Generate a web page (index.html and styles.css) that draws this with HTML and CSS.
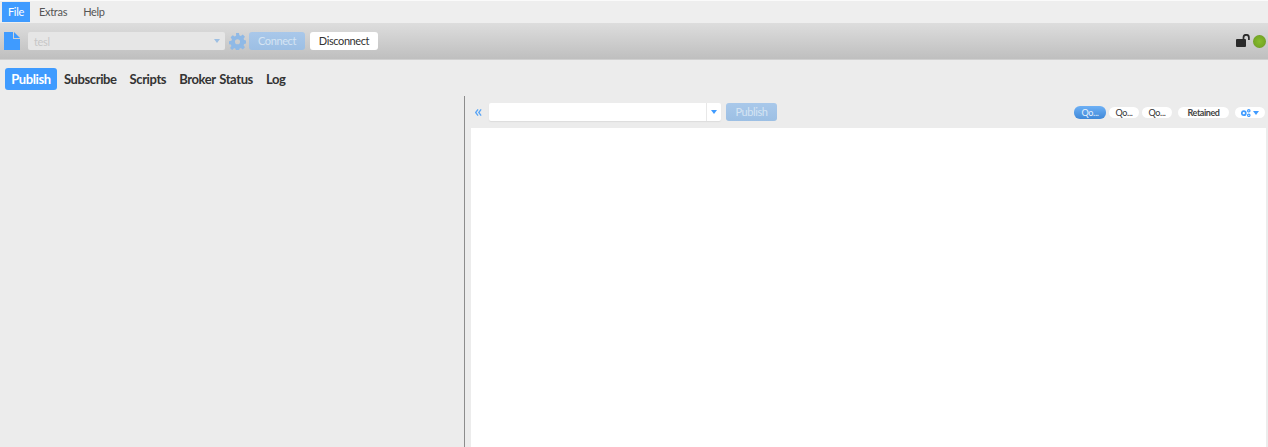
FILE: index.html
```html
<!DOCTYPE html>
<html lang="en">
<head>
<meta charset="utf-8">
<title>MQTT client</title>
<link rel="stylesheet" href="styles.css">
</head>
<body>
<nav class="menubar">
  <span class="menu active">File</span>
  <span class="menu">Extras</span>
  <span class="menu">Help</span>
</nav>
<header class="toolbar">
  <svg class="doc" width="16" height="18" viewBox="0 0 16 18"><path d="M0 0H9V7H16V18H0Z" fill="#3f9bff"/><path d="M10 0L16 6H10Z" fill="#3f9bff"/></svg>
  <div class="profile"><span class="profile-text">tesl</span><span class="caret faded"></span></div>
  <svg class="gear" width="17" height="17" viewBox="0 0 16 16"><path fill="#8fb9e6" fill-rule="evenodd" d="M6.600 0h2.800l.4 2.200 1.300.6L13 1.500l2 2-1.300 1.900.6 1.300 2.200.4v2.800l-2.200.4-.6 1.300 1.300 1.900-2 2-1.900-1.300-1.300.6-.4 2.200H6.600l-.4-2.200-1.300-.6L3 16.100l-2-2 1.300-1.900-.6-1.300L0 10.500V7.700l2.200-.4.6-1.300L1.500 4l2-2 1.900 1.300 1.300-.6ZM8 5.900a2.400 2.400 0 1 0 0 4.800 2.400 2.400 0 0 0 0-4.800Z"/></svg>
  <button class="btn primary-off connect">Connect</button>
  <button class="btn white disconnect">Disconnect</button>
  <div class="status">
    <svg width="15" height="13" viewBox="0 0 15 13"><rect x="0" y="5" width="10" height="8" rx="1" fill="#2a2a2a"/><path d="M7.500 5.500V3.500a2.700 2.700 0 0 1 5.400 0V6" fill="none" stroke="#2a2a2a" stroke-width="1.700"/></svg>
    <span class="led"></span>
  </div>
</header>
<div class="tabs">
  <span class="tab active">Publish</span>
  <span class="tab">Subscribe</span>
  <span class="tab">Scripts</span>
  <span class="tab">Broker Status</span>
  <span class="tab">Log</span>
</div>
<main class="split">
  <aside class="left"></aside>
  <section class="right">
    <div class="pubbar">
      <svg class="collapse" width="7" height="7" viewBox="0 0 8 8"><path d="M3.500 .5L.8 4l2.700 3.500M7 .5L4.300 4 7 7.500" fill="none" stroke="#5aa5f5" stroke-width="1.500"/></svg>
      <div class="topic"><div class="topic-input"></div><div class="topic-drop"><span class="caret"></span></div></div>
      <button class="btn primary-off publish">Publish</button>
      <div class="pills">
        <span class="pill on">Qo...</span>
        <span class="pill">Qo...</span>
        <span class="pill">Qo...</span>
        <span class="pill retained">Retained</span>
        <span class="pill opts">
          <svg width="11" height="8" viewBox="0 0 11 8"><circle cx="2.800" cy="4.200" r="2" fill="none" stroke="#3f9bff" stroke-width="1.700"/><circle cx="7.800" cy="1.800" r="1.200" fill="none" stroke="#3f9bff" stroke-width="1.200"/><circle cx="7.800" cy="6.300" r="1.200" fill="none" stroke="#3f9bff" stroke-width="1.200"/></svg>
          <span class="caret"></span>
        </span>
      </div>
    </div>
    <div class="editor"></div>
  </section>
</main>
</body>
</html>
```
FILE: styles.css
```css
html, body {
  margin: 0;
  padding: 0;
  height: 447px;
  overflow: hidden;
  background: #ececec;
  font-family: Lato, "Open Sans", sans-serif;
}
.menubar {
  height: 21px;
  padding: 1px 0 0 2px;
  display: flex;
  background: #eeeeee;
  border-top: 1px solid #fafafa;
}
.menu {
  font-size: 11px;
  letter-spacing: -0.3px;
  line-height: 20px;
  height: 20px;
  padding: 0 8px;
  color: #555;
}
.menu.active {
  background: #3f9bff;
  color: #fff;
  width: 28px;
  padding: 0;
  text-align: center;
  margin-right: 1px;
}
.toolbar {
  height: 37px;
  display: flex;
  align-items: center;
  background: linear-gradient(#dddddd, #bfbfbf);
  border-bottom: 1px solid #d0d0d0;
  box-sizing: border-box;
  padding-left: 4px;
}
.doc { margin-right: 8px; }
.profile {
  width: 197px;
  height: 18px;
  border-radius: 2px;
  background: #e6e6e6;
  display: flex;
  align-items: center;
  justify-content: space-between;
  padding: 0 6px;
  box-sizing: border-box;
  margin-right: 4px;
}
.profile-text { font-size: 11px; letter-spacing: -0.3px; color: #c6c6c6; }
.caret {
  display: inline-block;
  width: 0;
  height: 0;
  border-left: 3.500px solid transparent;
  border-right: 3.500px solid transparent;
  border-top: 4px solid #3f9bff;
}
.caret.faded { border-top-color: #9dbfe3; margin-right: -1px; }
.gear { margin-right: 3px; }
.btn {
  font-family: inherit;
  font-size: 11px;
  letter-spacing: -0.4px;
  border: 0;
  padding: 0 0 2px;
  height: 18px;
  border-radius: 3px;
}
.primary-off {
  background: linear-gradient(#a9c8ea, #9cbfe4);
  color: #d5e4f3;
}
.white { background: #fff; color: #333; }
.connect { width: 56px; margin-right: 5px; }
.disconnect { width: 68px; }
.status {
  margin-left: auto;
  display: flex;
  align-items: center;
  gap: 2px;
  padding-right: 2px;
}
.status svg { margin-top: -2px; }
.led {
  width: 13px;
  height: 13px;
  border-radius: 50%;
  background: radial-gradient(circle, #86bc2c 0, #76a825 60%, #55801d 100%);
}
.tabs {
  height: 36px;
  display: flex;
  align-items: center;
  padding: 1px 0 0 5px;
  box-sizing: border-box;
  gap: 13px;
}
.tab {
  font-size: 13px;
  letter-spacing: -0.4px;
  word-spacing: 1px;
  font-weight: 700;
  color: #333;
  line-height: 22px;
}
.tab.active {
  background: #3f9bff;
  color: #fff;
  border-radius: 3px;
  width: 52px;
  text-align: center;
  margin-right: -6px;
}
.split {
  display: flex;
  height: 351px;
}
.left {
  width: 464px;
  border-right: 1px solid #8c8c8c;
}
.right {
  flex: 1;
  display: flex;
  flex-direction: column;
  padding: 0 2px 0 6px;
  min-width: 0;
}
.pubbar {
  height: 32px;
  display: flex;
  align-items: center;
}
.collapse { margin: 1px 7px 0 4px; }
.topic {
  display: flex;
  width: 232px;
  height: 18px;
  background: #fff;
  border-radius: 2px;
  box-shadow: 0 1px 1px #ddd;
}
.topic-input { flex: 1; }
.topic-drop {
  width: 14px;
  border-left: 1px solid #e8e8e8;
  display: flex;
  align-items: center;
  justify-content: center;
}
.publish { width: 51px; margin-left: 5px; }
.pills {
  margin-left: auto;
  margin-top: 1px;
  display: flex;
  align-items: center;
  gap: 3px;
}
.pill {
  font-size: 9px;
  letter-spacing: -0.3px;
  line-height: 11px;
  height: 11px;
  width: 30px;
  text-align: center;
  border-radius: 6px;
  background: #fff;
  color: #333;
}
.pill.on {
  width: 32px;
  height: 13px;
  line-height: 13px;
  background: linear-gradient(#6db0f5, #3f88d8);
  color: #e8f2fc;
}
.pill.retained { width: 51px; margin-left: 3px; font-weight: 700; color: #444; letter-spacing: -0.45px; }
.pill.opts {
  width: 30px;
  margin-left: 3px;
  margin-right: 1px;
  display: flex;
  align-items: center;
  justify-content: center;
  gap: 1px;
}
.editor {
  flex: 1;
  background: #fff;
}
```
